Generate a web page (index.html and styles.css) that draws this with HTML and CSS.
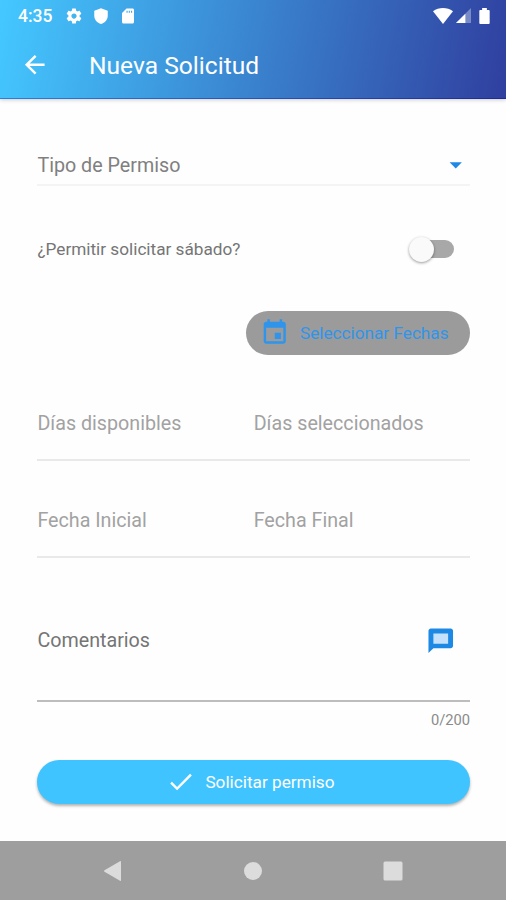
FILE: index.html
```html
<!DOCTYPE html>
<html lang="es">
<head>
    <meta charset="UTF-8">
    <meta name="viewport" content="width=device-width, initial-scale=1.0">
    <title>Nueva Solicitud</title>
    <link rel="stylesheet" href="styles.css">
</head>
<body>
    <!-- Encabezado -->
    <header class="header">
        <div class="status-bar">
            <span class="time">4:35</span>
            <svg class="status-icon" viewBox="0 0 24 24"><path d="M19.43 12.98c.04-.32.07-.64.07-.98s-.03-.66-.07-.98l2.11-1.65c.19-.15.24-.42.12-.64l-2-3.46c-.12-.22-.39-.3-.61-.22l-2.49 1c-.52-.4-1.08-.73-1.69-.98l-.38-2.65A.49.49 0 0 0 14 2h-4c-.25 0-.46.18-.49.42l-.38 2.65c-.61.25-1.17.59-1.69.98l-2.49-1c-.23-.09-.49 0-.61.22l-2 3.46c-.13.22-.07.49.12.64l2.11 1.65c-.04.32-.07.65-.07.98s.03.66.07.98l-2.11 1.65c-.19.15-.24.42-.12.64l2 3.46c.12.22.39.3.61.22l2.49-1c.52.4 1.08.73 1.69.98l.38 2.65c.03.24.24.42.49.42h4c.25 0 .46-.18.49-.42l.38-2.65c.61-.25 1.17-.59 1.69-.98l2.49 1c.23.09.49 0 .61-.22l2-3.46c.12-.22.07-.49-.12-.64l-2.11-1.65zM12 15.5c-1.93 0-3.5-1.57-3.5-3.5s1.57-3.5 3.5-3.5 3.5 1.57 3.5 3.5-1.57 3.5-3.5 3.5z"/></svg>
            <svg class="status-icon" viewBox="0 0 24 24"><path d="M12 1.5 3 5v6.5c0 5.300 3.800 9.700 9 11 5.200-1.300 9-5.700 9-11V5z"/></svg>
            <svg class="status-icon" viewBox="0 0 24 24"><path fill-rule="evenodd" d="M18 2h-8L4 8v12c0 1.100.9 2 2 2h12c1.100 0 2-.9 2-2V4c0-1.100-.9-2-2-2zM10 5h1.500v2.500H10zM13 5h1.500v2.500H13zM16 5h1.500v2.500H16z"/></svg>
            <div class="status-right">
                <svg class="wifi" viewBox="0 0 20 16"><path d="M10 16 0 3.300C3 1 6.300 0 10 0s7 1 10 3.300z"/></svg>
                <svg class="signal" viewBox="0 0 16 16"><path opacity=".35" d="M0 16 16 0v16z"/><path d="M0 16 10 6v10z"/></svg>
                <svg class="battery" viewBox="0 0 11 17"><path d="M3 0h5v2h2a1 1 0 0 1 1 1v13a1 1 0 0 1-1 1H1a1 1 0 0 1-1-1V3a1 1 0 0 1 1-1h2z"/></svg>
            </div>
        </div>
        <div class="app-bar">
            <svg class="icon" viewBox="0 0 24 24"><path d="M20 11H7.830l5.590-5.590L12 4l-8 8 8 8 1.410-1.410L7.830 13H20v-2z"/></svg>
            <h1>Nueva Solicitud</h1>
        </div>
    </header>

    <!-- Formulario -->
    <main class="form">
        <div class="select">
            <span>Tipo de Permiso</span>
            <svg class="icon" viewBox="0 0 24 24"><path d="M7 10l5 5 5-5z"/></svg>
        </div>

        <div class="switch-row">
            <span>¿Permitir solicitar sábado?</span>
            <div class="switch"><div class="thumb"></div></div>
        </div>

        <button class="btn btn-dates">
            <svg class="icon" viewBox="0 0 24 24"><path d="M17 12h-5v5h5v-5zM16 1v2H8V1H6v2H5c-1.110 0-1.990.9-1.990 2L3 19c0 1.100.89 2 2 2h14c1.100 0 2-.9 2-2V5c0-1.100-.9-2-2-2h-1V1h-2zm3 18H5V8h14v11z"/></svg>
            <span>Seleccionar Fechas</span>
        </button>

        <div class="fields">
            <div class="field">Días disponibles</div>
            <div class="field">Días seleccionados</div>
            <div class="field">Fecha Inicial</div>
            <div class="field">Fecha Final</div>
        </div>

        <div class="comments">
            <span>Comentarios</span>
            <svg class="icon" viewBox="0 0 24 24"><path fill="#c5e1fb" d="M5 5h14v10H5z"/><path fill-rule="evenodd" d="M20 2H4c-1.100 0-1.990.9-1.990 2L2 22l4-4h14c1.100 0 2-.9 2-2V4c0-1.100-.9-2-2-2zM6 6h12v8.500H6z"/></svg>
        </div>
        <div class="counter">0/200</div>

        <button class="btn btn-submit">
            <svg class="icon" viewBox="0 0 24 24"><path d="M9 16.170 4.830 12l-1.420 1.410L9 19 21 7l-1.410-1.410z"/></svg>
            <span>Solicitar permiso</span>
        </button>
    </main>

    <!-- Barra de navegación -->
    <nav class="nav-bar">
        <svg viewBox="0 0 20 22"><path d="M1.500 10.200 17 1.200q1-.5 1 .6v18.400q0 1.100-1 .6L1.500 11.800q-1.200-.8 0-1.600z"/></svg>
        <svg viewBox="0 0 20 22"><circle cx="10" cy="11" r="9"/></svg>
        <svg viewBox="0 0 20 22"><rect x=".5" y="1.500" width="19" height="19" rx="1.500"/></svg>
    </nav>
</body>
</html>
```

FILE: styles.css
```css
* {
    box-sizing: border-box;
}

body {
    font-family: Roboto, 'Liberation Sans', sans-serif;
    margin: 0;
    height: 900px;
    display: flex;
    flex-direction: column;
    background: #fefefe;
    color: #757575;
    font-size: 19.700px;
    overflow: hidden;
}

svg {
    display: block;
    flex: none;
    fill: currentColor;
}

.icon {
    width: 29.500px;
    height: 29.500px;
}

/* Encabezado */
.header {
    height: 99px;
    flex: none;
    color: #fff;
    background: linear-gradient(101deg, #44c8ff, #303f9f);
    box-shadow: inset 0 -1px rgba(0, 0, 160, 0.35), 0 1px 4px rgba(0, 0, 0, 0.2);
}

.status-bar {
    height: 32px;
    display: flex;
    align-items: center;
    padding: 0 16px 0 18px;
}

.time {
    width: 47px;
    font-size: 17.500px;
    font-weight: 500;
}

.status-icon {
    width: 18px;
    height: 18px;
    margin-right: 9px;
}

.status-right {
    display: flex;
    align-items: center;
    margin-left: auto;
    padding-bottom: 1px;
}

.wifi {
    width: 20px;
    height: 16px;
    margin-right: 3px;
}

.signal {
    width: 15px;
    height: 15px;
    margin-right: 8px;
}

.battery {
    width: 11px;
    height: 16px;
}

.app-bar {
    height: 66px;
    display: flex;
    align-items: center;
    gap: 39.500px;
    padding-left: 20px;
}

.app-bar h1 {
    margin: 0;
    font-size: 24.600px;
    font-weight: 400;
}

/* Formulario */
.form {
    flex: 1;
    padding: 47px 36px 0 37.400px;
}

.select {
    height: 40px;
    display: flex;
    align-items: center;
    justify-content: space-between;
    border-bottom: 2px solid #f4f4f4;
    color: #808080;
}

.select .icon {
    color: #1e88e5;
}

.switch-row {
    height: 40px;
    margin-top: 43px;
    display: flex;
    align-items: center;
    justify-content: space-between;
    font-size: 17.200px;
}

.switch {
    width: 44px;
    height: 18px;
    margin-right: 16px;
    border-radius: 9px;
    background: #a8a8a8;
    display: flex;
    align-items: center;
}

.thumb {
    width: 25px;
    height: 25px;
    margin-left: -1px;
    border-radius: 50%;
    background: #fafafa;
    box-shadow: 0 1px 3px rgba(0, 0, 0, 0.4);
}

.btn {
    display: flex;
    align-items: center;
    justify-content: center;
    height: 44px;
    padding: 0 7px 0 0;
    border: none;
    border-radius: 22px;
    font-family: inherit;
    font-size: 17.200px;
}

.btn-dates {
    width: 224px;
    margin: 42px 0 0 auto;
    gap: 10px;
    background: #9b9b9b;
    color: #2f95ec;
}

.fields {
    margin-top: 33px;
    display: grid;
    grid-template-columns: 1fr 1fr;
    row-gap: 24px;
    color: #a2a2a2;
}

.field {
    height: 73px;
    line-height: 72px;
    border-bottom: 2px solid #e9e9e9;
}

.comments {
    height: 121px;
    margin-top: 23px;
    display: flex;
    align-items: center;
    justify-content: space-between;
    padding-right: 15px;
    border-bottom: 2px solid #bdbdbd;
}

.comments .icon {
    color: #1e88e5;
}

.counter {
    margin-top: 9px;
    line-height: 18px;
    text-align: right;
    font-size: 14.700px;
    color: #8a8a8a;
}

.btn-submit {
    width: 100%;
    margin-top: 31px;
    gap: 10px;
    background: #40c4ff;
    color: #fff;
    box-shadow: 0 2px 3px rgba(0, 0, 0, 0.3);
}

/* Barra de navegación */
.nav-bar {
    height: 59px;
    flex: none;
    display: flex;
    justify-content: center;
    align-items: center;
    gap: 120px;
    background: #9e9e9e;
    color: #dcdcdc;
}

.nav-bar svg {
    width: 20px;
    height: 22px;
}
```
